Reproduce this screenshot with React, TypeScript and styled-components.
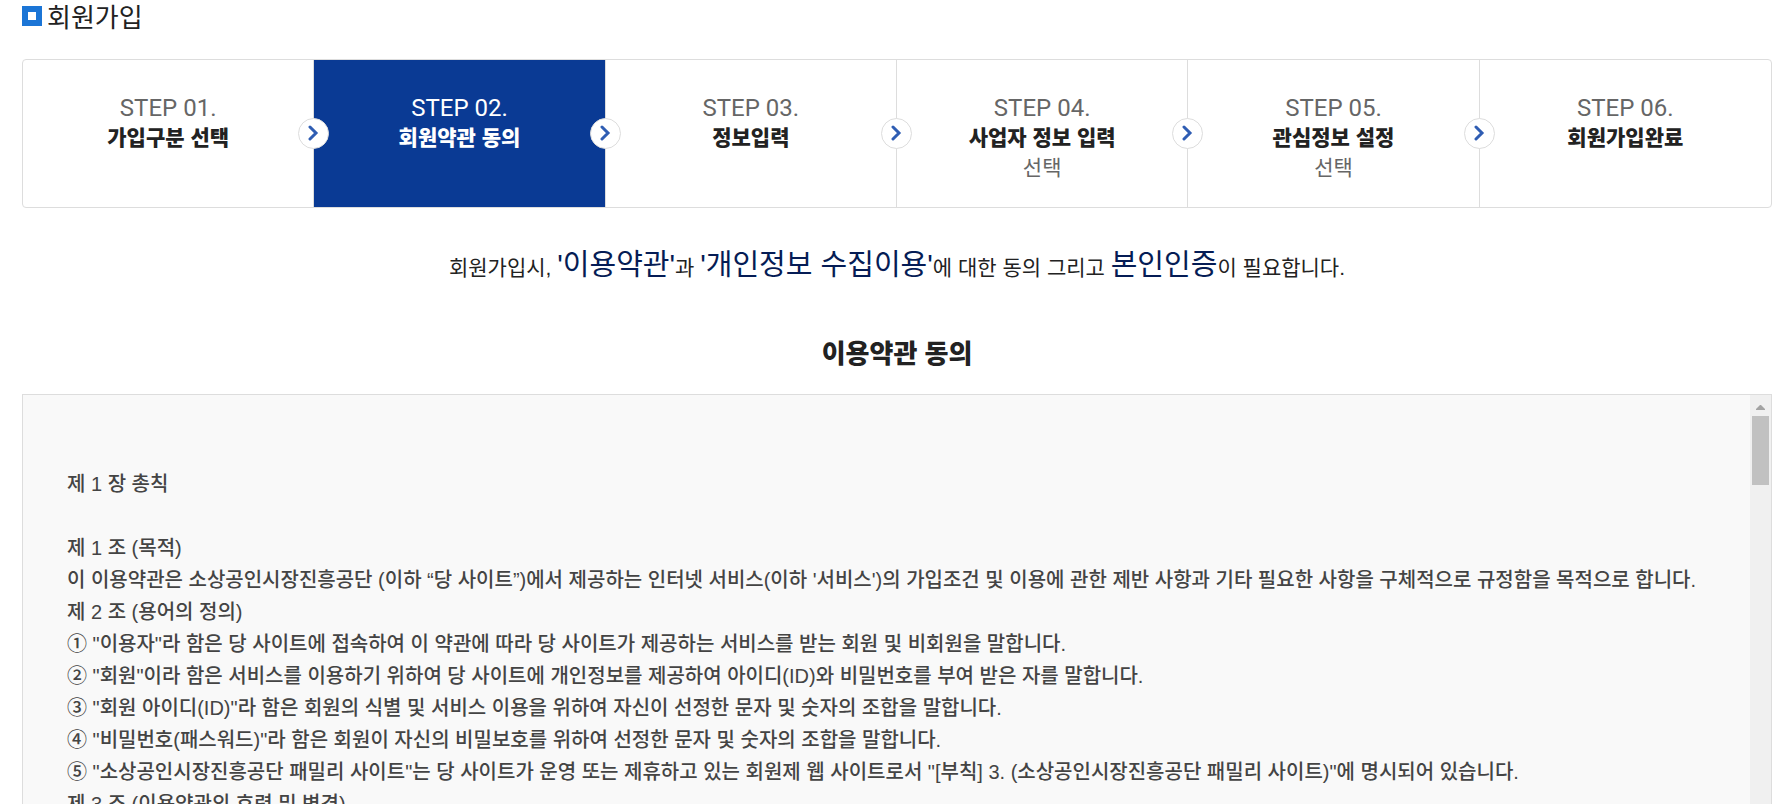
import React from "react";
import styled, { createGlobalStyle } from "styled-components";

const GlobalStyle = createGlobalStyle`
  *, *::before, *::after { box-sizing: border-box; }
  body {
    margin: 0;
    background: #fff;
    color: #222;
    font-family: "Liberation Sans", "Noto Sans CJK KR", sans-serif;
    font-size: 20px;
    line-height: 32px;
  }
  h1, h2, p, ol { margin: 0; padding: 0; }
`;

const Page = styled.main`
  height: 100vh;
  overflow: hidden;
  padding: 0 8px 0 22px;
`;

const TitleBar = styled.header`
  display: flex;
  align-items: center;
  gap: 5px;
  height: 36px;
`;

const TitleMark = styled.span`
  width: 20px;
  height: 20px;
  margin-bottom: 4px;
  border: 6px solid #1b75d6;
  background: #fff;
`;

const Title = styled.h1`
  font-size: 26px;
  font-weight: 400;
  line-height: 36px;
`;

const Steps = styled.ol`
  display: grid;
  grid-template-columns: repeat(6, 1fr);
  margin-top: 23px;
  border: 1px solid #ddd;
  border-radius: 4px;
  list-style: none;
`;

const Step = styled.li<{ $active?: boolean }>`
  position: relative;
  min-height: 147px;
  padding: 33px 0 24px;
  border-right: 1px solid #ddd;
  text-align: center;
  line-height: 30px;
  color: ${(p) => (p.$active ? "#fff" : "#666")};
  background: ${(p) => (p.$active ? "#0a3a94" : "transparent")};
  background-clip: padding-box;

  &:last-child {
    border-right: 0;
  }
`;

const StepNumber = styled.span`
  display: block;
  font-family: Roboto, sans-serif;
  font-size: 24px;
`;

const StepName = styled.strong<{ $active?: boolean }>`
  display: block;
  font-size: 21px;
  font-weight: 900;
  color: ${(p) => (p.$active ? "#fff" : "#222")};
`;

const StepNote = styled.span`
  display: block;
  font-size: 21px;
`;

const StepArrow = styled.span`
  position: absolute;
  top: 50%;
  right: -16px;
  z-index: 1;
  display: flex;
  align-items: center;
  justify-content: center;
  width: 31px;
  height: 31px;
  margin-top: -16px;
  border: 1px solid #ddd;
  border-radius: 50%;
  background: #fff;
`;

const Notice = styled.p`
  margin-top: 37px;
  text-align: center;
  font-size: 21px;
  line-height: 40px;
`;

const Key = styled.span`
  font-size: 29px;
  color: #051c55;
`;

const SectionTitle = styled.h2`
  margin-top: 46px;
  text-align: center;
  font-size: 26px;
  font-weight: 900;
  line-height: 40px;
`;

const TermsBox = styled.section`
  display: flex;
  height: 600px;
  margin-top: 20px;
  border: 1px solid #ddd;
  background: #f9f9f9;
`;

const TermsText = styled.div`
  flex: 1;
  min-width: 0;
  overflow: hidden;
  padding: 73px 36px 40px 44px;
  color: #444;
  font-weight: 500;
`;

const Clause = styled.p<{ $chapter?: boolean }>`
  margin-bottom: ${(p) => (p.$chapter ? "32px" : "0")};
`;

const ScrollTrack = styled.div`
  display: flex;
  flex-direction: column;
  align-items: center;
  width: 21px;
  background: #f0f0f0;
`;

const ScrollUp = styled.button`
  display: flex;
  align-items: center;
  justify-content: center;
  width: 21px;
  height: 21px;
  padding: 3px 0 0;
  border: 0;
  background: none;
`;

const ScrollThumb = styled.div`
  width: 17px;
  height: 69px;
  background: #c1c1c1;
`;

const steps = [
  { name: "가입구분 선택" },
  { name: "회원약관 동의", active: true },
  { name: "정보입력" },
  { name: "사업자 정보 입력", note: "선택" },
  { name: "관심정보 설정", note: "선택" },
  { name: "회원가입완료" },
];

const clauses = [
  "제 1 조 (목적)",
  "이 이용약관은 소상공인시장진흥공단 (이하 “당 사이트”)에서 제공하는 인터넷 서비스(이하 '서비스')의 가입조건 및 이용에 관한 제반 사항과 기타 필요한 사항을 구체적으로 규정함을 목적으로 합니다.",
  "제 2 조 (용어의 정의)",
  "① \"이용자\"라 함은 당 사이트에 접속하여 이 약관에 따라 당 사이트가 제공하는 서비스를 받는 회원 및 비회원을 말합니다.",
  "② \"회원\"이라 함은 서비스를 이용하기 위하여 당 사이트에 개인정보를 제공하여 아이디(ID)와 비밀번호를 부여 받은 자를 말합니다.",
  "③ \"회원 아이디(ID)\"라 함은 회원의 식별 및 서비스 이용을 위하여 자신이 선정한 문자 및 숫자의 조합을 말합니다.",
  "④ \"비밀번호(패스워드)\"라 함은 회원이 자신의 비밀보호를 위하여 선정한 문자 및 숫자의 조합을 말합니다.",
  "⑤ \"소상공인시장진흥공단 패밀리 사이트\"는 당 사이트가 운영 또는 제휴하고 있는 회원제 웹 사이트로서 \"[부칙] 3. (소상공인시장진흥공단 패밀리 사이트)\"에 명시되어 있습니다.",
  "제 3 조 (이용약관의 효력 및 변경)",
];

export default function App() {
  return (
    <>
      <GlobalStyle />
      <Page lang="ko">
        <TitleBar>
          <TitleMark />
          <Title>회원가입</Title>
        </TitleBar>

        <Steps>
          {steps.map((step, i) => (
            <Step key={step.name} $active={step.active}>
              <StepNumber>{`STEP 0${i + 1}.`}</StepNumber>
              <StepName $active={step.active}>{step.name}</StepName>
              {step.note && <StepNote>{step.note}</StepNote>}
              {i < steps.length - 1 && (
                <StepArrow>
                  <svg width="11" height="16" viewBox="0 0 11 16" fill="none" aria-hidden="true">
                    <path d="M2 2l6 6-6 6" stroke="#2f5db3" strokeWidth="3" strokeLinecap="round" />
                  </svg>
                </StepArrow>
              )}
            </Step>
          ))}
        </Steps>

        <Notice>
          회원가입시, <Key>'이용약관'</Key>과 <Key>'개인정보 수집이용'</Key>에 대한 동의 그리고 <Key>본인인증</Key>이 필요합니다.
        </Notice>

        <SectionTitle>이용약관 동의</SectionTitle>
        <TermsBox>
          <TermsText>
            <Clause $chapter>제 1 장 총칙</Clause>
            {clauses.map((text) => (
              <Clause key={text}>{text}</Clause>
            ))}
          </TermsText>
          <ScrollTrack>
            <ScrollUp type="button" aria-label="위로 스크롤">
              <svg width="9" height="5" viewBox="0 0 9 5" aria-hidden="true">
                <path d="M4 0h1l4 4v1H0V4z" fill="#a3a3a3" />
              </svg>
            </ScrollUp>
            <ScrollThumb />
          </ScrollTrack>
        </TermsBox>
      </Page>
    </>
  );
}
